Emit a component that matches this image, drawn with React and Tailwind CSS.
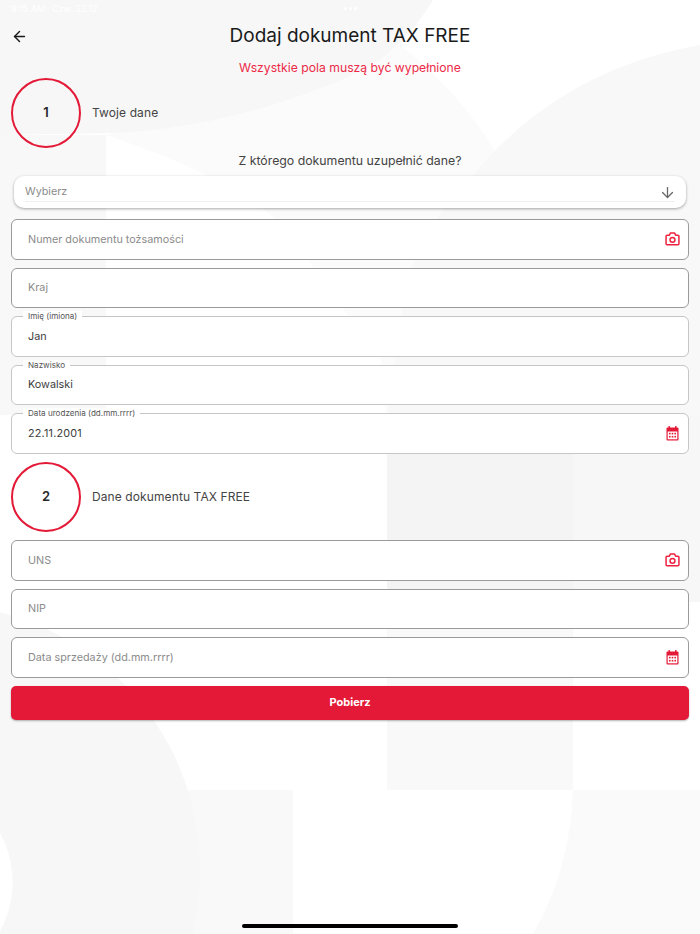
import React from "react";
import { ArrowLeft, ArrowDown } from "lucide-react";

function Camera() {
  return (
    <svg width="15" height="14" viewBox="0 0 14 13" fill="none" className="mr-[-1px] shrink-0">
      <path d="M1.9 2.9H4.1L5 1H9L9.9 2.9H12.1C12.6 2.9 13 3.3 13 3.8V11C13 11.5 12.6 11.9 12.1 11.9H1.9C1.4 11.9 1 11.5 1 11V3.8C1 3.3 1.4 2.9 1.9 2.9Z" stroke="#ee2240" strokeWidth="1.4" strokeLinejoin="round" />
      <circle cx="7" cy="7.3" r="2.3" stroke="#ee2240" strokeWidth="1.4" />
    </svg>
  );
}

function Calendar() {
  return (
    <svg width="13" height="15" viewBox="0 0 13 15" className="shrink-0">
      <rect x="0.5" y="1.5" width="12" height="13" rx="1" fill="#e31937" />
      <rect x="2.5" y="0" width="1.4" height="3" fill="#e31937" />
      <rect x="9.1" y="0" width="1.4" height="3" fill="#e31937" />
      <rect x="1.7" y="5.5" width="9.6" height="7.8" fill="#ffffff" />
      <g fill="#e31937">
        <rect x="3" y="6.8" width="1.6" height="1.6" />
        <rect x="5.7" y="6.8" width="1.6" height="1.6" />
        <rect x="8.4" y="6.8" width="1.6" height="1.6" />
        <rect x="3" y="9.9" width="1.6" height="1.6" />
        <rect x="5.7" y="9.9" width="1.6" height="1.6" />
        <rect x="8.4" y="9.9" width="1.6" height="1.6" />
      </g>
    </svg>
  );
}

function Field({ label, value, placeholder, icon, dark, spaced }) {
  return (
    <div className={`relative flex h-[40.5px] items-center justify-between rounded-[6px] border bg-white pl-4 pr-[9px] ${dark ? "border-[#9a9a9a]" : "border-[#c6c6c6]"}`}>
      {label && (
        <span className="absolute -top-[6px] left-[11px] bg-white px-[5px] text-[8.1px] leading-[11px] text-[#555555]">{label}</span>
      )}
      {value ? (
        <span className={`mt-[1px] text-[10.8px] text-[#3c3c3c] ${spaced ? "tracking-[0.2px]" : ""}`}>{value}</span>
      ) : (
        <span className="mt-[1px] text-[10.8px] text-[#8b8b8b]">{placeholder}</span>
      )}
      {icon}
    </div>
  );
}

function Step({ n, title }) {
  return (
    <div className="flex items-center gap-[11px]">
      <div className="flex h-[70px] w-[70px] items-center justify-center rounded-full border-2 border-[#e31937] text-[13px] font-semibold text-[#262626]">{n}</div>
      <span className="text-[12px] tracking-[0.1px] text-[#444444]">{title}</span>
    </div>
  );
}

export default function App() {
  return (
    <div className="relative h-[934px] w-[700px] overflow-hidden bg-white font-['Inter',sans-serif]">
      <svg className="absolute inset-0" width="700" height="934" viewBox="0 0 700 934">
        <path d="M400 45Q470 100 507 173Q530 225 545 270L590 340L573 420H387L381 360L300 250Q270 190 106 135Z" fill="#fbfbfb" />
        <path d="M0 0H433Q400 55 350 76Q240 125 117 133L0 135Z" fill="#f7f7f7" />
        <path d="M700 45Q560 70 473 175Q420 230 405 290L387 420H700Z" fill="#f8f8f8" />
        <rect x="0" y="135" width="106" height="280" fill="#f8f8f8" />
        <rect x="387" y="415" width="186" height="375" fill="#f9f9f9" />
        <rect x="387" y="415" width="186" height="187" fill="#f4f4f4" />
        <rect x="573" y="415" width="127" height="187" fill="#f7f7f7" />
        <rect x="184" y="790" width="109" height="144" fill="#f9f9f9" />
        <circle cx="-66" cy="870" r="266" fill="#f7f7f7" />
        <circle cx="-90" cy="882" r="102.6" fill="#ffffff" />
        <path d="M573 790Q570 870 533 934H700V790Z" fill="#fafafa" />
      </svg>

      <div className="relative flex h-full flex-col">
        <div className="flex h-[16px] items-start px-[11px] pt-[3px] text-[9px] leading-[11px] text-white">
          <span className="mr-[7px]">9:15 AM</span>
          <span>Czw. 22.12</span>
        </div>
        <div className="absolute left-[344px] top-[7px] flex gap-[2px]">
          <span className="h-[3px] w-[3px] rounded-full bg-white" />
          <span className="h-[3px] w-[3px] rounded-full bg-white" />
          <span className="h-[3px] w-[3px] rounded-full bg-white" />
        </div>
        <div className="relative mt-[7px] flex h-[26px] items-center justify-center">
          <ArrowLeft className="absolute left-[11px] top-[5px] text-[#1a1a1a]" size={17} strokeWidth={2} />
          <h1 className="text-[19px] font-normal leading-[26px] text-[#1a1a1a]">Dodaj dokument TAX FREE</h1>
        </div>
        <p className="mt-[9px] text-center text-[12.2px] leading-[20px] text-[#ec2a47]">Wszystkie pola muszą być wypełnione</p>

        <div className="flex flex-col px-[11px]">
          <Step n="1" title="Twoje dane" />
          <p className="mt-[4px] text-center text-[12.3px] leading-[17px] text-[#444444]">Z którego dokumentu uzupełnić dane?</p>
          <div className="mx-[3px] mt-[7px] flex h-[32px] items-start rounded-[10px] bg-white px-[11px] shadow-[0_1px_3px_rgba(0,0,0,0.35)]">
            <div className="flex h-[26px] w-full items-center justify-between border-b border-[#eeeeee] pt-[6px]">
              <span className="mt-[2px] text-[10.8px] text-[#8b8b8b]">Wybierz</span>
              <ArrowDown size={17} strokeWidth={1.8} className="mr-[-0.5px] mt-[1px] text-[#666666]" />
            </div>
          </div>
          <div className="mt-[11px] flex flex-col gap-[8px]">
            <Field placeholder="Numer dokumentu tożsamości" icon={<Camera />} dark />
            <Field placeholder="Kraj" dark />
            <Field label="Imię (imiona)" value="Jan" />
            <Field label="Nazwisko" value="Kowalski" />
            <Field label="Data urodzenia (dd.mm.rrrr)" value="22.11.2001" spaced icon={<Calendar />} />
          </div>
          <div className="mt-[8.5px]"><Step n="2" title="Dane dokumentu TAX FREE" /></div>
          <div className="mt-[8px] flex flex-col gap-[8px]">
            <Field placeholder="UNS" icon={<Camera />} dark />
            <Field placeholder="NIP" dark />
            <Field placeholder="Data sprzedaży (dd.mm.rrrr)" icon={<Calendar />} dark />
            <button className="flex h-[34px] items-center justify-center rounded-[5px] bg-[#e31937] text-[11px] font-bold text-white shadow-[0_1px_2px_rgba(0,0,0,0.3)]">Pobierz</button>
          </div>
        </div>

        <div className="absolute bottom-[6px] left-[242px] h-[4px] w-[216px] rounded-full bg-black" />
      </div>
    </div>
  );
}
